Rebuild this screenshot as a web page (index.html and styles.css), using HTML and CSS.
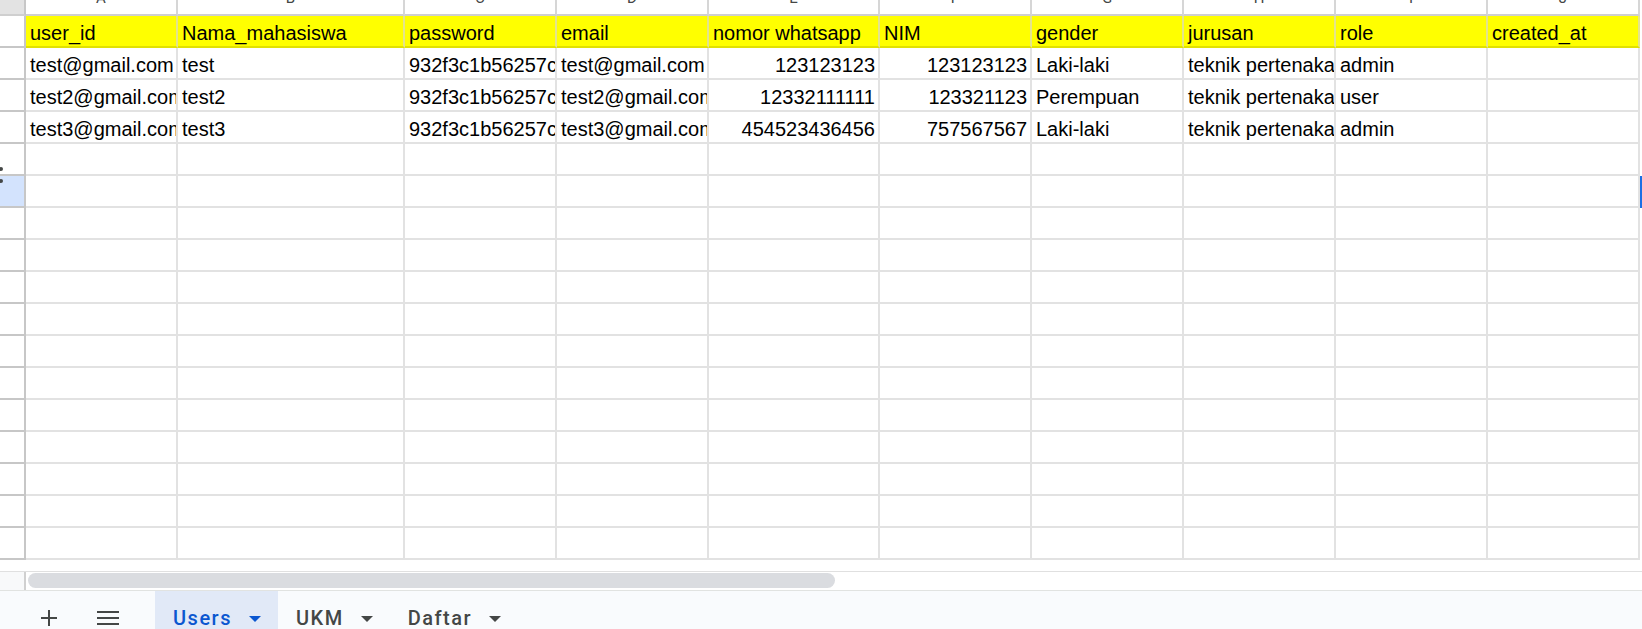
FILE: index.html
```html
<!DOCTYPE html>
<html lang="id">
<head>
<meta charset="utf-8">
<title>Users - Spreadsheet</title>
<link rel="stylesheet" href="styles.css">
</head>
<body>
<div class="app">
  <div class="sheet">
    <div class="row colhead">
      <div class="cell rh corner"></div>
      <div class="cell ch"><span>A</span></div>
      <div class="cell ch"><span>B</span></div>
      <div class="cell ch"><span>C</span></div>
      <div class="cell ch"><span>D</span></div>
      <div class="cell ch"><span>E</span></div>
      <div class="cell ch"><span>F</span></div>
      <div class="cell ch"><span>G</span></div>
      <div class="cell ch"><span>H</span></div>
      <div class="cell ch"><span>I</span></div>
      <div class="cell ch"><span>J</span></div>
      <div class="cell edge"></div>
    </div>
    <div class="row hdr">
      <div class="cell rh"></div>
      <div class="cell">user_id</div>
      <div class="cell">Nama_mahasiswa</div>
      <div class="cell">password</div>
      <div class="cell">email</div>
      <div class="cell">nomor whatsapp</div>
      <div class="cell">NIM</div>
      <div class="cell">gender</div>
      <div class="cell">jurusan</div>
      <div class="cell">role</div>
      <div class="cell">created_at</div>
      <div class="cell edge"></div>
    </div>
    <div class="row">
      <div class="cell rh"></div>
      <div class="cell">test@gmail.com</div>
      <div class="cell">test</div>
      <div class="cell">932f3c1b56257ce8539ac269d7aab42550dacf8818d075f0bdf1990562aae3ef</div>
      <div class="cell">test@gmail.com</div>
      <div class="cell num">123123123</div>
      <div class="cell num">123123123</div>
      <div class="cell">Laki-laki</div>
      <div class="cell">teknik pertenakan</div>
      <div class="cell">admin</div>
      <div class="cell"></div>
      <div class="cell edge"></div>
    </div>
    <div class="row">
      <div class="cell rh"></div>
      <div class="cell">test2@gmail.com</div>
      <div class="cell">test2</div>
      <div class="cell">932f3c1b56257ce8539ac269d7aab42550dacf8818d075f0bdf1990562aae3ef</div>
      <div class="cell">test2@gmail.com</div>
      <div class="cell num">12332111111</div>
      <div class="cell num">123321123</div>
      <div class="cell">Perempuan</div>
      <div class="cell">teknik pertenakan</div>
      <div class="cell">user</div>
      <div class="cell"></div>
      <div class="cell edge"></div>
    </div>
    <div class="row">
      <div class="cell rh"></div>
      <div class="cell">test3@gmail.com</div>
      <div class="cell">test3</div>
      <div class="cell">932f3c1b56257ce8539ac269d7aab42550dacf8818d075f0bdf1990562aae3ef</div>
      <div class="cell">test3@gmail.com</div>
      <div class="cell num">454523436456</div>
      <div class="cell num">757567567</div>
      <div class="cell">Laki-laki</div>
      <div class="cell">teknik pertenakan</div>
      <div class="cell">admin</div>
      <div class="cell"></div>
      <div class="cell edge"></div>
    </div>
    <div class="row"><div class="cell rh"></div><div class="cell"></div><div class="cell"></div><div class="cell"></div><div class="cell"></div><div class="cell"></div><div class="cell"></div><div class="cell"></div><div class="cell"></div><div class="cell"></div><div class="cell"></div><div class="cell edge"></div></div>
    <div class="row selected"><div class="cell rh"></div><div class="cell"></div><div class="cell"></div><div class="cell"></div><div class="cell"></div><div class="cell"></div><div class="cell"></div><div class="cell"></div><div class="cell"></div><div class="cell"></div><div class="cell"></div><div class="cell edge"></div></div>
    <div class="row"><div class="cell rh"></div><div class="cell"></div><div class="cell"></div><div class="cell"></div><div class="cell"></div><div class="cell"></div><div class="cell"></div><div class="cell"></div><div class="cell"></div><div class="cell"></div><div class="cell"></div><div class="cell edge"></div></div>
    <div class="row"><div class="cell rh"></div><div class="cell"></div><div class="cell"></div><div class="cell"></div><div class="cell"></div><div class="cell"></div><div class="cell"></div><div class="cell"></div><div class="cell"></div><div class="cell"></div><div class="cell"></div><div class="cell edge"></div></div>
    <div class="row"><div class="cell rh"></div><div class="cell"></div><div class="cell"></div><div class="cell"></div><div class="cell"></div><div class="cell"></div><div class="cell"></div><div class="cell"></div><div class="cell"></div><div class="cell"></div><div class="cell"></div><div class="cell edge"></div></div>
    <div class="row"><div class="cell rh"></div><div class="cell"></div><div class="cell"></div><div class="cell"></div><div class="cell"></div><div class="cell"></div><div class="cell"></div><div class="cell"></div><div class="cell"></div><div class="cell"></div><div class="cell"></div><div class="cell edge"></div></div>
    <div class="row"><div class="cell rh"></div><div class="cell"></div><div class="cell"></div><div class="cell"></div><div class="cell"></div><div class="cell"></div><div class="cell"></div><div class="cell"></div><div class="cell"></div><div class="cell"></div><div class="cell"></div><div class="cell edge"></div></div>
    <div class="row"><div class="cell rh"></div><div class="cell"></div><div class="cell"></div><div class="cell"></div><div class="cell"></div><div class="cell"></div><div class="cell"></div><div class="cell"></div><div class="cell"></div><div class="cell"></div><div class="cell"></div><div class="cell edge"></div></div>
    <div class="row"><div class="cell rh"></div><div class="cell"></div><div class="cell"></div><div class="cell"></div><div class="cell"></div><div class="cell"></div><div class="cell"></div><div class="cell"></div><div class="cell"></div><div class="cell"></div><div class="cell"></div><div class="cell edge"></div></div>
    <div class="row"><div class="cell rh"></div><div class="cell"></div><div class="cell"></div><div class="cell"></div><div class="cell"></div><div class="cell"></div><div class="cell"></div><div class="cell"></div><div class="cell"></div><div class="cell"></div><div class="cell"></div><div class="cell edge"></div></div>
    <div class="row"><div class="cell rh"></div><div class="cell"></div><div class="cell"></div><div class="cell"></div><div class="cell"></div><div class="cell"></div><div class="cell"></div><div class="cell"></div><div class="cell"></div><div class="cell"></div><div class="cell"></div><div class="cell edge"></div></div>
    <div class="row"><div class="cell rh"></div><div class="cell"></div><div class="cell"></div><div class="cell"></div><div class="cell"></div><div class="cell"></div><div class="cell"></div><div class="cell"></div><div class="cell"></div><div class="cell"></div><div class="cell"></div><div class="cell edge"></div></div>
    <div class="row"><div class="cell rh"></div><div class="cell"></div><div class="cell"></div><div class="cell"></div><div class="cell"></div><div class="cell"></div><div class="cell"></div><div class="cell"></div><div class="cell"></div><div class="cell"></div><div class="cell"></div><div class="cell edge"></div></div>
    <span class="dot dot1"></span>
    <span class="dot dot2"></span>
  </div>
  <div class="hscroll">
    <div class="hscroll-corner"></div>
    <div class="hscroll-track"><div class="hscroll-thumb"></div></div>
  </div>
  <div class="tabbar">
    <div class="iconbtn plus">
      <svg width="16" height="16" viewBox="0 0 16 16"><rect x="0" y="7" width="16" height="2" fill="#444746"/><rect x="7" y="0" width="2" height="16" fill="#444746"/></svg>
    </div>
    <div class="iconbtn menu">
      <svg width="22" height="16" viewBox="0 0 22 16"><rect x="0" y="1" width="22" height="2" fill="#444746"/><rect x="0" y="7" width="22" height="2" fill="#444746"/><rect x="0" y="13" width="22" height="2" fill="#444746"/></svg>
    </div>
    <div class="tablist">
      <div class="tab active"><span class="tab-label">Users</span><svg class="caret" width="12" height="6" viewBox="0 0 12 6"><path d="M0 0h12L6 6z" fill="#0b57d0"/></svg></div>
      <div class="tab"><span class="tab-label">UKM</span><svg class="caret" width="12" height="6" viewBox="0 0 12 6"><path d="M0 0h12L6 6z" fill="#444746"/></svg></div>
      <div class="tab"><span class="tab-label">Daftar</span><svg class="caret" width="12" height="6" viewBox="0 0 12 6"><path d="M0 0h12L6 6z" fill="#444746"/></svg></div>
    </div>
  </div>
</div>
</body>
</html>
```
FILE: styles.css
```css
html, body {
  margin: 0;
  padding: 0;
  background: #ffffff;
}
body {
  width: 1642px;
  height: 629px;
  overflow: hidden;
  font-family: "Liberation Sans", Arial, sans-serif;
}
.app {
  display: flex;
  flex-direction: column;
  height: 629px;
}
.sheet {
  position: relative;
  height: 571px;
  overflow: hidden;
  flex: none;
}
.row {
  display: grid;
  grid-template-columns: 26px 152px 227px 152px 152px 171px 152px 152px 152px 152px 152px 2px;
  height: 32px;
}
.cell {
  box-sizing: border-box;
  border-right: 2px solid #e2e2e2;
  border-bottom: 2px solid #e2e2e2;
  overflow: hidden;
  white-space: nowrap;
  font-size: 20px;
  line-height: 22px;
  color: #000000;
  padding: 0 3px 2px 4px;
  display: flex;
  align-items: flex-end;
}
.cell.num {
  justify-content: flex-end;
}
.cell.edge {
  border: none;
  padding: 0;
}
.cell.rh {
  padding: 0;
  border-right: 2px solid #c7c7c7;
  border-bottom-color: #c7c7c7;
  background: #ffffff;
}
.row.selected .cell.rh {
  background: #d3e3fd;
}
.row.selected .cell.edge {
  background: #1b6fe4;
}
/* column header (cut off at top) */
.row.colhead {
  height: 16px;
}
.row.colhead .cell {
  border-bottom-color: #cfcfcf;
  border-right-color: #d6d6d6;
  justify-content: center;
  padding: 0;
}
.row.colhead .cell.corner {
  background: #e3e3e3;
  border-right-color: #c7c7c7;
}
.row.colhead .cell.edge {
  border: none;
}
.ch span {
  font-family: Roboto, "Liberation Sans", sans-serif;
  font-size: 15px;
  line-height: 14px;
  color: #444746;
  margin-bottom: 9px;
}
/* yellow header row */
.row.hdr .cell {
  background: #ffff00;
  border-right-color: #e4e48c;
  border-bottom-color: #e1e100;
}
.row.hdr .cell.rh {
  background: #ffffff;
  border-right-color: #c7c7c7;
  border-bottom-color: #c7c7c7;
}
.row.hdr .cell.edge {
  background: #ffffff;
}
/* selected row drag handle dots */
.dot {
  position: absolute;
  left: -1px;
  width: 4px;
  height: 4px;
  border-radius: 50%;
  background: #444746;
}
.dot1 { top: 167px; }
.dot2 { top: 179px; }
/* horizontal scrollbar */
.hscroll {
  flex: none;
  height: 19px;
  box-sizing: border-box;
  border-top: 1px solid #e0e0e0;
  display: flex;
}
.hscroll-corner {
  width: 26px;
  box-sizing: border-box;
  background: #f8f9fa;
  border-right: 2px solid #d0d0d0;
}
.hscroll-track {
  flex: 1;
  padding: 1px 0 0 2px;
}
.hscroll-thumb {
  width: 807px;
  height: 15px;
  border-radius: 8px;
  background: #dadce0;
}
/* sheet tabs */
.tabbar {
  flex: none;
  height: 39px;
  box-sizing: border-box;
  background: #f9fbfd;
  border-top: 1px solid #e1e3e1;
  display: flex;
  align-items: stretch;
}
.iconbtn {
  width: 48px;
  box-sizing: border-box;
  padding-top: 19px;
  display: flex;
  justify-content: center;
  align-items: flex-start;
}
.iconbtn.plus {
  margin-left: 25px;
}
.iconbtn.menu {
  margin-left: 11px;
}
.tablist {
  margin-left: 23px;
  display: flex;
}
.tab {
  display: flex;
  align-items: flex-start;
  gap: 17px;
  padding: 15px 17px 0 18px;
  font-family: Roboto, "Liberation Sans", sans-serif;
  font-size: 20px;
  line-height: 24px;
  font-weight: 500;
  letter-spacing: 1.5px;
  color: #444746;
}
.tab.active {
  background: #e1e9f7;
  color: #0b57d0;
}
.caret {
  margin-top: 10px;
  flex: none;
}
```
